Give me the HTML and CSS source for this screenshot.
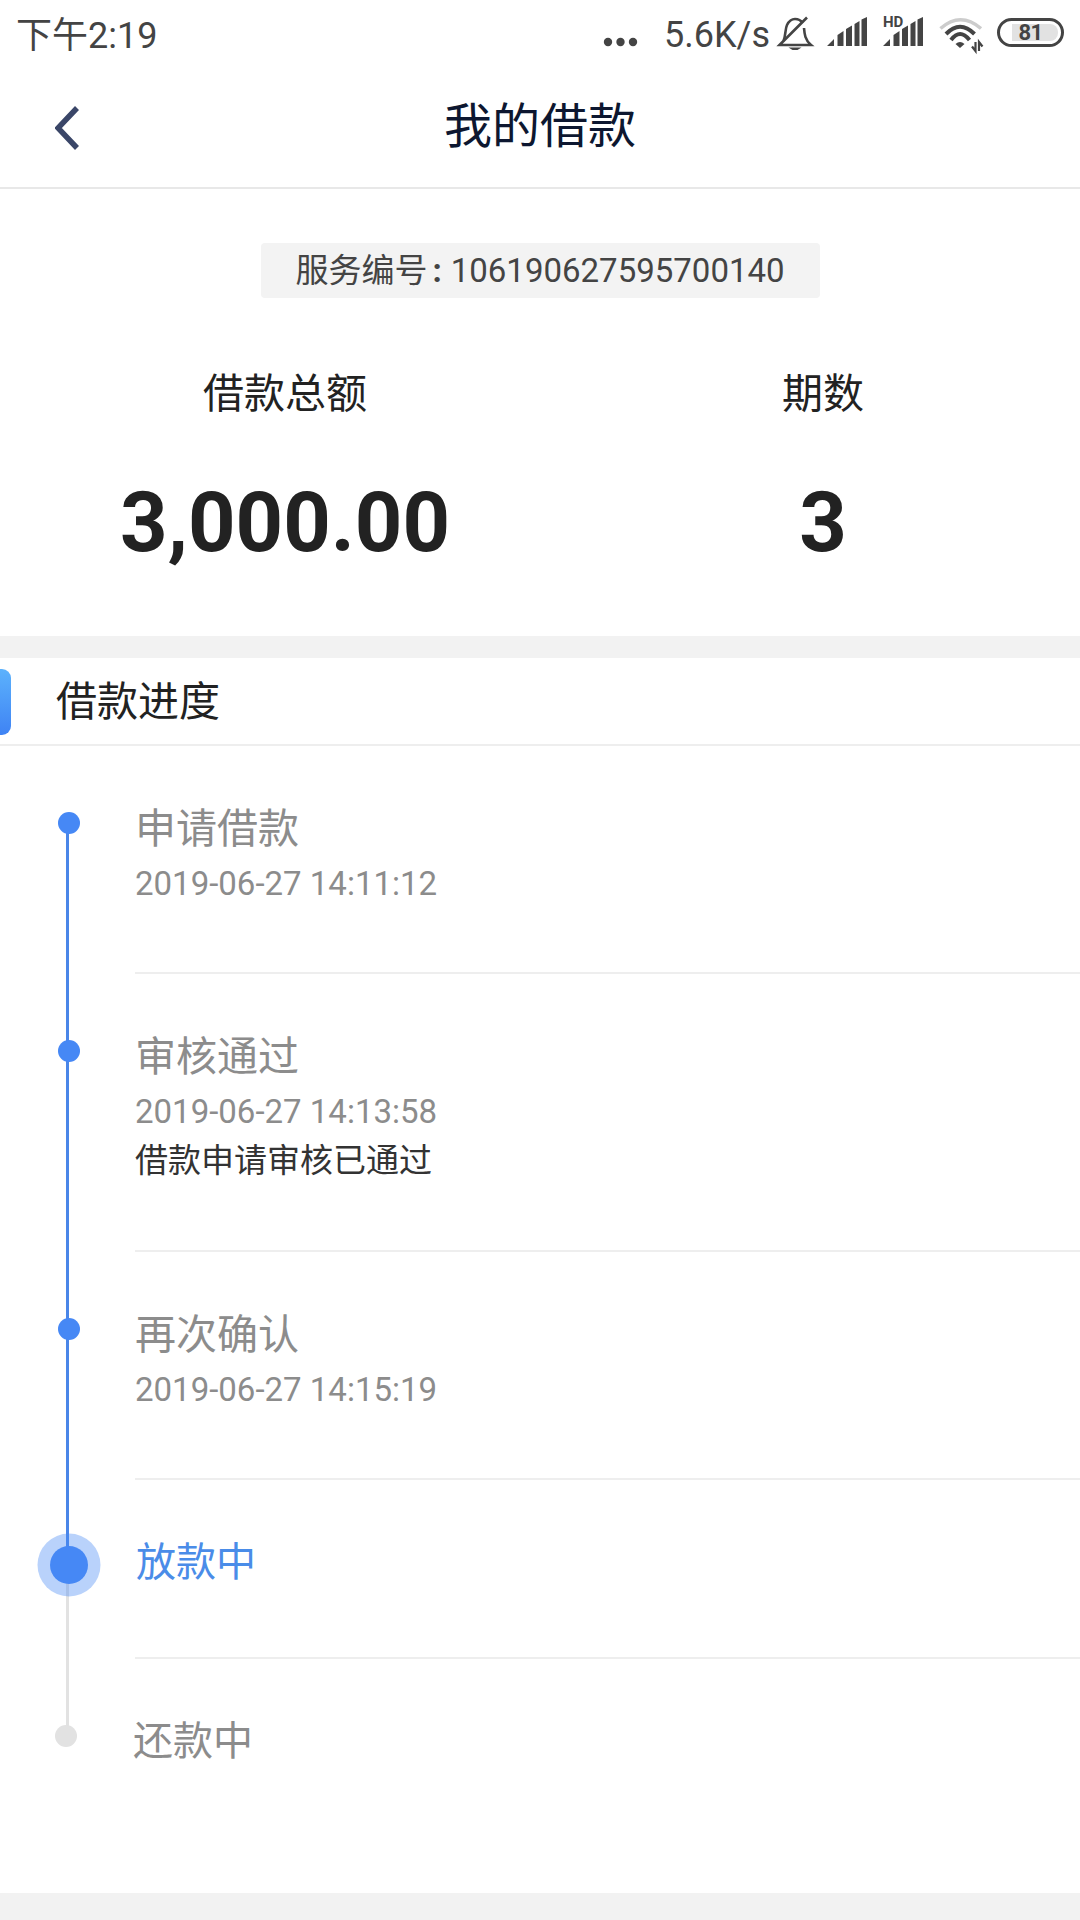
FILE: index.html
```html
<!DOCTYPE html>
<html lang="zh-CN">
<head>
  <meta charset="UTF-8">
  <meta name="viewport" content="width=device-width, initial-scale=1.0">
  <title>我的借款</title>
  <link rel="stylesheet" href="styles.css">
</head>
<body>
  <div class="status-bar">
    <div class="status-time">下午2:19</div>
    <div class="status-icons">
      <svg class="icon-dots" width="35" height="10" viewBox="0 0 35 10"><circle cx="5" cy="5" r="4.2"/><circle cx="17.5" cy="5" r="4.2"/><circle cx="30" cy="5" r="4.2"/></svg>
      <span class="status-speed">5.6K/s</span>
      <svg class="icon-bell" width="33" height="33" viewBox="0 0 33 33" fill="none" stroke="#444" stroke-width="2.6">
        <path d="M4.500 24C7 18 6 12 8 8c2-4 5-6 8-6 3 0 6 1.500 7.500 4"/>
        <path d="M25 11c.5 6 1 12 7 17H.5L28 .5"/>
        <path d="M9.500 30.500h13l-4 2.500h-5z" fill="#444" stroke="none"/>
      </svg>
      <svg class="icon-signal" width="40" height="30" viewBox="0 0 40 30" fill="#444">
        <path d="M0 29l7-7v7zM10.500 29V18l6-4v15zM19 29V12l6-3.500V29zM27.500 29V7l5-3v25zM34.500 29V2.500L40 0v29z"/>
      </svg>
      <svg class="icon-signal-hd" width="40" height="30" viewBox="0 0 40 30" fill="#444">
        <text x="0" y="9.500" class="hd-text">HD</text>
        <path d="M0 29l7-7v7zM10.500 29V18l6-4v15zM19 29V12l6-3.500V29zM27.500 29V7l5-3v25zM34.500 29V2.500L40 0v29z"/>
      </svg>
      <svg class="icon-wifi" width="44" height="34" viewBox="0 0 44 34" fill="none">
        <path d="M1.500 10.500Q21.500-7 42 10.500" stroke="#ccc" stroke-width="3.500"/>
        <path d="M7 16Q21 1.500 35.500 16" stroke="#444" stroke-width="4"/>
        <path d="M12 22Q21 10 30.500 22" stroke="#444" stroke-width="4"/>
        <path d="M16.500 26Q21 22 25.500 26L21 30z" fill="#444"/>
        <path d="M36.500 24v9l-3.500-4.500M40 33v-9l3.500 4.500" stroke="#444" stroke-width="2.200"/>
      </svg>
      <div class="battery"><span class="battery-fill"></span><span class="battery-num">81</span></div>
    </div>
  </div>

  <div class="nav-bar">
    <svg class="back-icon" width="24" height="44" viewBox="0 0 24 44" fill="none"><path d="M22 2 3 22l19 20" stroke="#3a4668" stroke-width="5.500"/></svg>
    <div class="nav-title">我的借款</div>
  </div>

  <div class="summary">
    <div class="service-no">服务编号<span class="service-colon">:</span>106190627595700140</div>
    <div class="stats">
      <div class="stat">
        <div class="stat-label">借款总额</div>
        <div class="stat-value">3,000.00</div>
      </div>
      <div class="stat">
        <div class="stat-label">期数</div>
        <div class="stat-value">3</div>
      </div>
    </div>
  </div>

  <div class="band"></div>

  <div class="section-title">
    <span class="section-tab"></span>
    借款进度
  </div>

  <ul class="timeline">
    <li class="step step-first">
      <span class="rail"></span>
      <span class="dot"></span>
      <div class="step-body">
        <div class="step-title">申请借款</div>
        <div class="step-date">2019-06-27 14:11:12</div>
      </div>
    </li>
    <li class="step">
      <span class="rail"></span>
      <span class="dot"></span>
      <div class="step-body">
        <div class="step-title">审核通过</div>
        <div class="step-date">2019-06-27 14:13:58</div>
        <div class="step-note">借款申请审核已通过</div>
      </div>
    </li>
    <li class="step">
      <span class="rail"></span>
      <span class="dot"></span>
      <div class="step-body">
        <div class="step-title">再次确认</div>
        <div class="step-date">2019-06-27 14:15:19</div>
      </div>
    </li>
    <li class="step step-current">
      <span class="rail"></span>
      <span class="rail rail-todo"></span>
      <span class="dot"></span>
      <div class="step-body">
        <div class="step-title">放款中</div>
      </div>
    </li>
    <li class="step step-todo">
      <span class="rail rail-todo"></span>
      <span class="dot"></span>
      <div class="step-body">
        <div class="step-title">还款中</div>
      </div>
    </li>
  </ul>

  <div class="band band-bottom"></div>
</body>
</html>
```

FILE: styles.css
```css
* {
  box-sizing: border-box;
}
body {
  margin: 0;
  height: 1920px;
  overflow: hidden;
  background-color: white;
  color: #222;
  font-family: Roboto, "Noto Sans CJK SC", sans-serif;
  display: flex;
  flex-direction: column;
}

/* status bar */
.status-bar {
  height: 64px;
  padding: 0 16px;
  display: flex;
  justify-content: space-between;
  align-items: flex-start;
  color: #444;
}
.status-time {
  font-size: 36px;
  line-height: 40px;
  margin-top: 16px;
}
.status-icons {
  display: flex;
  align-items: flex-start;
}
.status-icons svg {
  overflow: visible;
}
.icon-dots {
  fill: #444;
  margin-top: 37px;
  margin-right: 26px;
}
.status-speed {
  font-size: 36px;
  line-height: 40px;
  margin-top: 15px;
  margin-right: 9px;
}
.icon-bell {
  margin-top: 17px;
  margin-right: 15px;
}
.icon-signal {
  margin-top: 17px;
  margin-right: 16px;
}
.icon-signal-hd {
  margin-top: 17px;
  margin-right: 16px;
}
.hd-text {
  font-size: 15px;
  font-weight: 700;
}
.icon-wifi {
  margin-top: 18px;
  margin-right: 14px;
}
.battery {
  position: relative;
  width: 67px;
  height: 29px;
  margin-top: 18px;
  border: 3px solid #444;
  border-radius: 15px;
  display: flex;
  align-items: center;
  justify-content: center;
}
.battery-fill {
  position: absolute;
  left: 12px;
  top: 3px;
  width: 46px;
  height: 17px;
  border-radius: 0 8px 8px 0;
  background-color: #e2e2e2;
}
.battery-num {
  position: relative;
  font-size: 22px;
  font-weight: 700;
  letter-spacing: -0.5px;
  line-height: 23px;
}

/* nav */
.nav-bar {
  height: 125px;
  position: relative;
  display: flex;
  align-items: center;
  justify-content: center;
  border-bottom: 2px solid #e8e8e8;
}
.back-icon {
  position: absolute;
  left: 55px;
  top: 42px;
}
.nav-title {
  font-size: 48px;
  line-height: 64px;
  color: #0d1730;
  margin-top: 3px;
}

/* summary */
.summary {
  height: 447px;
  padding-top: 54px;
  display: flex;
  flex-direction: column;
  align-items: center;
}
.service-no {
  width: 559px;
  height: 55px;
  background-color: #f3f3f3;
  border-radius: 4px;
  color: #444;
  font-size: 33px;
  line-height: 55px;
  text-align: center;
}
.service-colon {
  font-weight: 700;
  margin: 0 9px 0 5px;
}
.stats {
  width: 100%;
  margin-top: 68px;
  display: grid;
  grid-template-columns: 570px 506px;
  text-align: center;
}
.stat-label {
  font-size: 41px;
  line-height: 56px;
}
.stat-value {
  font-size: 83px;
  font-weight: 700;
  line-height: 100px;
  margin-top: 51px;
}

.band {
  height: 22px;
  background-color: #f2f2f2;
}
.band-bottom {
  height: 27px;
}

/* section header */
.section-title {
  height: 88px;
  padding-left: 56px;
  position: relative;
  font-size: 41px;
  line-height: 88px;
  border-bottom: 2px solid #eeeeee;
}
.section-tab {
  position: absolute;
  left: 0;
  top: 11px;
  width: 11px;
  height: 66px;
  border-radius: 0 9px 9px 0;
  background: linear-gradient(#5cb2fc, #3f83f4);
}

/* timeline */
.timeline {
  list-style: none;
  margin: 0;
  padding: 0;
  flex: 1;
}
.step {
  position: relative;
  padding-left: 135px;
}
.step-body {
  padding: 55px 0 65px;
  border-bottom: 2px solid #eeeeee;
}
.step-title {
  font-size: 41px;
  line-height: 56px;
  color: #8c8c8c;
}
.step-date {
  font-size: 33px;
  line-height: 46px;
  margin-top: 4px;
  color: #8c8c8c;
}
.step-note {
  font-size: 33px;
  line-height: 46px;
  margin-top: 3px;
  margin-bottom: 1px;
  color: #333;
}
.rail {
  position: absolute;
  left: 66px;
  top: 0;
  bottom: 0;
  width: 3px;
  background-color: #4a86e8;
}
.dot {
  position: absolute;
  left: 58px;
  top: 66px;
  width: 22px;
  height: 22px;
  border-radius: 50%;
  background-color: #4688f5;
}
.step-first .rail {
  top: 77px;
}
.step-current .rail {
  bottom: auto;
  height: 68px;
}
.step-current .rail-todo {
  top: 85px;
  bottom: 0;
  height: auto;
  background-color: #e2e2e2;
}
.step-current .dot {
  left: 50px;
  top: 66px;
  width: 38px;
  height: 38px;
  box-shadow: 0 0 0 12.500px rgba(70, 136, 245, 0.38);
}
.step-current .step-body {
  padding: 55px 0 66px 1px;
}
.step-current .step-title {
  font-size: 40px;
  color: #4a8ce8;
}
.step-todo .rail-todo {
  height: 78px;
  bottom: auto;
  background-color: #e2e2e2;
}
.step-todo {
  padding-left: 133px;
}
.step-todo .dot {
  left: 55px;
  background-color: #e2e2e2;
}
.step-todo .step-title {
  font-size: 40px;
}
.step-todo .step-body {
  border-bottom: none;
}
```
